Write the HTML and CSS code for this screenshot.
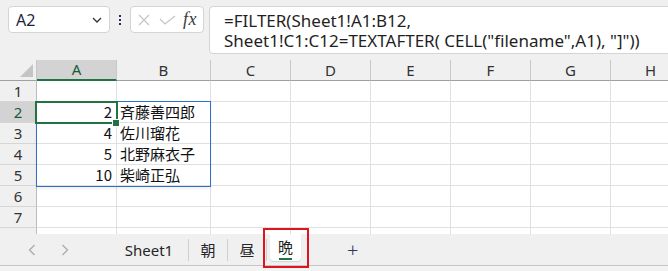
FILE: index.html
```html
<!DOCTYPE html>
<html lang="ja">
<head>
<meta charset="utf-8">
<link rel="stylesheet" href="styles.css">
</head>
<body>
<div class="topbar">
  <div class="namebox">
    <span class="nb-text">A2</span>
    <svg class="chev" width="10" height="6" viewBox="0 0 10 6"><path d="M1 1 L5 5 L9 1" fill="none" stroke="#333" stroke-width="1.3"/></svg>
  </div>
  <div class="dots"><i></i><i></i><i></i></div>
  <div class="fxbox">
    <svg width="12" height="12" viewBox="0 0 12 12"><path d="M1 1 L11 11 M11 1 L1 11" stroke="#c4c4c4" stroke-width="1.2" fill="none"/></svg>
    <svg width="17" height="10" viewBox="0 0 17 10"><path d="M1 4 L6 9 L16 1" stroke="#c4c4c4" stroke-width="1.2" fill="none"/></svg>
    <span class="fx">fx</span>
  </div>
  <div class="formula">
    <div class="fline">=FILTER(Sheet1!A1:B12,</div>
    <div class="fline">Sheet1!C1:C12=TEXTAFTER( CELL("filename",A1), "]"))</div>
  </div>
</div>

<div class="sheet">
  <div class="grid">
    <div class="corner"><span class="tri"></span></div>
    <div class="ch sel">A</div><div class="ch">B</div><div class="ch">C</div><div class="ch">D</div><div class="ch">E</div><div class="ch">F</div><div class="ch">G</div><div class="ch">H</div>

    <div class="rh">1</div><div class="c"></div><div class="c"></div><div class="c"></div><div class="c"></div><div class="c"></div><div class="c"></div><div class="c"></div><div class="c"></div>
    <div class="rh sel">2</div><div class="c num">2</div><div class="c">斉藤善四郎</div><div class="c"></div><div class="c"></div><div class="c"></div><div class="c"></div><div class="c"></div><div class="c"></div>
    <div class="rh">3</div><div class="c num">4</div><div class="c">佐川瑠花</div><div class="c"></div><div class="c"></div><div class="c"></div><div class="c"></div><div class="c"></div><div class="c"></div>
    <div class="rh">4</div><div class="c num">5</div><div class="c">北野麻衣子</div><div class="c"></div><div class="c"></div><div class="c"></div><div class="c"></div><div class="c"></div><div class="c"></div>
    <div class="rh">5</div><div class="c num">10</div><div class="c">柴崎正弘</div><div class="c"></div><div class="c"></div><div class="c"></div><div class="c"></div><div class="c"></div><div class="c"></div>
    <div class="rh">6</div><div class="c"></div><div class="c"></div><div class="c"></div><div class="c"></div><div class="c"></div><div class="c"></div><div class="c"></div><div class="c"></div>
    <div class="rh">7</div><div class="c"></div><div class="c"></div><div class="c"></div><div class="c"></div><div class="c"></div><div class="c"></div><div class="c"></div><div class="c"></div>
    <div class="rh"></div><div class="c"></div><div class="c"></div><div class="c"></div><div class="c"></div><div class="c"></div><div class="c"></div><div class="c"></div><div class="c"></div>
  </div>
  <div class="range"></div>
  <div class="active"></div>
  <div class="handle"></div>
</div>

<div class="tabs">
  <svg class="nav first" width="8" height="12" viewBox="0 0 8 12"><path d="M6.5 1 L1.5 6 L6.5 11" fill="none" stroke="#a8a8a8" stroke-width="1.2"/></svg>
  <svg class="nav" width="8" height="12" viewBox="0 0 8 12"><path d="M1.5 1 L6.5 6 L1.5 11" fill="none" stroke="#a8a8a8" stroke-width="1.2"/></svg>
  <div class="tab t-sheet1">Sheet1</div>
  <div class="tab t-cjk">朝</div>
  <div class="tab t-cjk">昼</div>
  <div class="tab-cur"><span class="cur-label">晩</span><span class="ul"></span></div>
  <div class="plus">+</div>
  <div class="redbox"></div>
</div>
<div class="status"></div>
</body>
</html>
```

FILE: styles.css
```css
* { box-sizing: border-box; }
html, body { margin: 0; padding: 0; }
body {
  width: 668px;
  height: 271px;
  overflow: hidden;
  background: #f0f0f0;
  font-family: "Noto Sans", "Noto Sans CJK JP", sans-serif;
  color: #1f1f1f;
  position: relative;
}

/* ---------- formula bar ---------- */
.topbar {
  height: 60px;
  display: flex;
  align-items: flex-start;
  padding: 6px 0 0 8px;
}
.topbar > * { flex: none; }
.namebox {
  width: 102px;
  height: 27px;
  background: #fff;
  border: 1px solid #d4d4d4;
  border-radius: 4px;
  display: flex;
  align-items: center;
  justify-content: space-between;
  padding: 0 7px 0 7px;
}
.nb-text { font-size: 16px; color: #1f1f3f; }
.chev { margin-top: 1px; }
.dots {
  width: 20px;
  height: 27px;
  display: flex;
  flex-direction: column;
  align-items: center;
  justify-content: center;
  gap: 2px;
}
.dots i { display: block; width: 2px; height: 2px; background: #2d2d5a; }
.fxbox {
  width: 74px;
  height: 27px;
  background: #fff;
  border: 1px solid #d4d4d4;
  border-radius: 4px;
  display: flex;
  align-items: center;
  padding-left: 7px;
  gap: 9px;
}
.fx {
  font-family: "Liberation Serif", serif;
  font-style: italic;
  font-size: 18px;
  color: #3c3c3c;
  margin-left: -2px;
  letter-spacing: 0.5px;
}
.formula {
  margin-left: 5px;
  width: 480px;
  height: 48px;
  background: #fff;
  border: 1px solid #d4d4d4;
  border-radius: 4px;
  padding: 4px 0 0 14px;
  font-size: 17px;
  color: #1f1f1f;
  white-space: nowrap;
}
.fline { height: 20px; line-height: 20px; }

/* ---------- grid ---------- */
.sheet {
  position: relative;
  height: 174px;
  overflow: hidden;
  background: #fff;
}
.grid {
  display: grid;
  grid-template-columns: 37px 80px 94px repeat(6, 80px);
  grid-auto-rows: 21px;
}
.corner, .ch, .rh {
  background: #f0f0f0;
}
.corner {
  position: relative;
  border-right: 1px solid #c6c6c6;
  border-bottom: 1px solid #a0a0a0;
}
.tri {
  position: absolute;
  right: 3px;
  bottom: 3px;
  width: 0; height: 0;
  border-left: 13px solid transparent;
  border-bottom: 13px solid #c4c4c4;
}
.ch {
  border-right: 1px solid #c8c8c8;
  border-bottom: 1px solid #a0a0a0;
  text-align: center;
  font-size: 15px;
  line-height: 20px;
  color: #333;
}
.ch.sel {
  background: #d3d3d3;
  color: #185c37;
  border-bottom: 2px solid #217346;
  line-height: 19px;
}
.rh {
  border-right: 1px solid #bcbcbc;
  border-bottom: 1px solid #d6d6d6;
  text-align: center;
  font-size: 15px;
  line-height: 20px;
  color: #333;
}
.rh.sel { background: #d3d3d3; color: #185c37; }
.c {
  border-right: 1px solid #e0e0e0;
  border-bottom: 1px solid #e0e0e0;
  font-family: "Noto Sans CJK JP", sans-serif;
  font-size: 15px;
  line-height: 20px;
  color: #111;
  padding: 0 3px;
  white-space: nowrap;
}
.c.num { text-align: right; padding-right: 4px; }

.range {
  position: absolute;
  left: 36px;
  top: 41px;
  width: 175px;
  height: 86px;
  border: 1px solid #2e6fc8;
  box-shadow: 0 2px 3px rgba(0,0,0,0.06);
}
.active {
  position: absolute;
  left: 35px;
  top: 41px;
  width: 83px;
  height: 23px;
  border: 2px solid #217346;
}
.handle {
  position: absolute;
  left: 113px;
  top: 60px;
  width: 6px;
  height: 6px;
  background: #217346;
  outline: 1px solid #fff;
}

/* ---------- sheet tabs ---------- */
.tabs {
  position: relative;
  height: 32px;
  display: flex;
  align-items: center;
  border-bottom: 1px solid #c6c6c6;
  background: #f0f0f0;
}
.nav { flex: none; }
.nav.first { margin-left: 28px; margin-right: 25px; }
.tab {
  height: 22px;
  font-size: 15px;
  line-height: 22px;
  color: #262626;
  border-right: 1px solid #cfcfcf;
  text-align: center;
}
.t-sheet1 { margin-left: 47px; width: 73px; padding-right: 6px; }
.t-cjk { width: 39px; font-family: "Noto Sans CJK JP", sans-serif; }
.tab-cur {
  margin-left: 3px;
  width: 31px;
  height: 27px;
  align-self: flex-start;
  background: #fff;
  border-radius: 0 0 4px 4px;
  box-shadow: 0 1px 1px rgba(0,0,0,0.12);
  display: flex;
  flex-direction: column;
  align-items: center;
  font-family: "Noto Sans CJK JP", sans-serif;
  font-size: 15px;
  color: #1f1f1f;
}
.cur-label { line-height: 20px; margin-top: 3px; }
.ul { display: block; width: 13px; height: 2px; background: #217346; margin-top: 1px; }
.plus {
  margin-left: 46px;
  font-size: 20px;
  font-weight: 300;
  color: #333355;
  line-height: 20px;
}
.redbox {
  position: absolute;
  left: 263px;
  top: -6px;
  width: 46px;
  height: 40px;
  border: 2px solid #e0141e;
}

.status {
  height: 8px;
  background: #f3f3f3;
}
```
